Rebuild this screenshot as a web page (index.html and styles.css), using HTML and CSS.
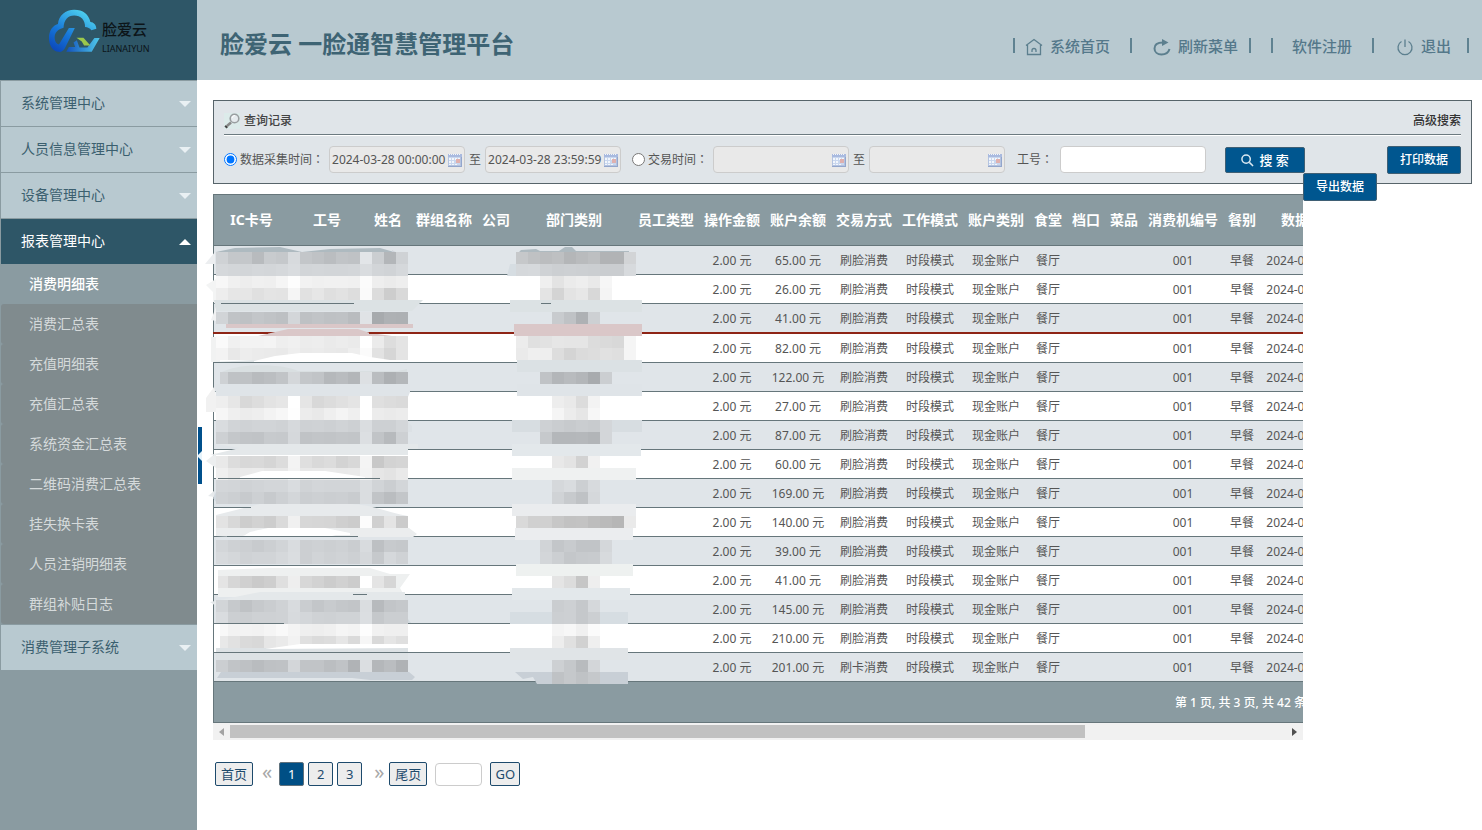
FILE: index.html
```html
<!DOCTYPE html>
<html lang="zh-CN">
<head>
<meta charset="utf-8">
<title>脸爱云 一脸通智慧管理平台</title>
<link rel="stylesheet" href="styles.css">
</head>
<body>
<svg class="defs" aria-hidden="true">
  <defs>
    <symbol id="cal" viewBox="0 0 14 14">
      <rect x="0" y="1" width="14" height="13" fill="#b4c3e0"/>
      <rect x="0" y="1" width="14" height="3" fill="#a9badf"/>
      <rect x="1" y="4" width="11" height="8" fill="#c9d7ee"/>
      <path d="M1 5h2v2h-2zM4 5h2v2h-2zM7 5h2v2h-2zM10 5h2v2h-2zM1 8h2v2h-2zM4 8h2v2h-2zM1 11h2v1h-2zM4 11h2v1h-2zM7 11h2v1h-2z" fill="#f2f6fc"/>
      <rect x="8" y="6" width="4" height="4" fill="#dfb0ae"/>
      <path d="M0 13h14v1h-14zM13 4h1v10h-1z" fill="#93a6cc"/>
      <path d="M1 1.500h12" stroke="#f4f6fa" stroke-dasharray="1 1"/>
    </symbol>
  </defs>
</svg>
<div class="layout">
  <aside class="sidebar">
    <div class="logo">
      <svg class="logo-mark" viewBox="144 24 160 138" role="img" aria-label="脸爱云">
        <defs>
          <linearGradient id="lg" x1="0" y1="1" x2="0.7" y2="0">
            <stop offset="0" stop-color="#0a3fb4"/><stop offset=".45" stop-color="#1676d8"/><stop offset="1" stop-color="#4ed0ee"/>
          </linearGradient>
          <linearGradient id="lb" x1="0" y1="0" x2="1" y2="0">
            <stop offset="0" stop-color="#1251bd"/><stop offset="1" stop-color="#50c8ea"/>
          </linearGradient>
        </defs>
        <path d="M176 156C158 154 147 136 147 114C147 92 158 77 174 72C176 47 197 29 223 29C250 29 267 43 272 66C282 67 289 74 290 86L275 91C270 84 264 82 256 81C256 59 243 46 223 46C204 46 192 59 191 83C173 88 164 98 164 113C164 124 169 132 177 134L207 84L225 84L195 145C189 154 184 157 176 156Z" fill="url(#lg)"/>
        <path d="M199 156L207 141L226 141L221 128L231 121L239 143L263 143L284 114L300 114L276 156Z" fill="url(#lb)"/>
        <path d="M230 113L251 113L272 137L253 137L246 125Z" fill="#9cc84b"/>
      </svg>
      <div class="logo-text"><b>脸爱云</b><small>LIANAIYUN</small></div>
    </div>
    <nav class="menu">
      <a class="group" href="#">系统管理中心<i class="arrow"></i></a>
      <a class="group" href="#">人员信息管理中心<i class="arrow"></i></a>
      <a class="group" href="#">设备管理中心<i class="arrow"></i></a>
      <a class="group open" href="#">报表管理中心<i class="arrow up"></i></a>
      <div class="submenu">
        <a class="current" href="#">消费明细表</a>
        <a href="#">消费汇总表</a>
        <a href="#">充值明细表</a>
        <a href="#">充值汇总表</a>
        <a href="#">系统资金汇总表</a>
        <a href="#">二维码消费汇总表</a>
        <a href="#">挂失换卡表</a>
        <a href="#">人员注销明细表</a>
        <a href="#">群组补贴日志</a>
      </div>
      <a class="group" href="#">消费管理子系统<i class="arrow"></i></a>
    </nav>
    <button class="handle" aria-label="收起菜单"></button>
  </aside>
  <div class="page">
    <header class="topbar">
      <h1>脸爱云 一脸通智慧管理平台</h1>
      <nav class="tools">
        <i class="bar"></i>
        <a class="home" href="#"><svg viewBox="0 0 18 18"><path d="M1 7.500L9 1.500L17 7.500M2.500 7V16.500H15.500V7M7 14V12.500a2 2 0 0 1 4 0V14"/></svg>系统首页</a>
        <i class="bar"></i>
        <a class="refresh" href="#"><svg viewBox="0 0 18 18"><path d="M10 4.500C5 4.500 1.500 6.500 1.500 10.500C1.500 14 4.500 16.500 8.500 16.500C12.500 16.500 15.500 14.500 16.500 11" stroke-width="2"/><path class="solid" d="M9 1L15.500 4.500L9 8Z"/></svg>刷新菜单</a>
        <i class="bar"></i>
        <i class="bar second"></i>
        <a class="register" href="#">软件注册</a>
        <i class="bar"></i>
        <a class="exit" href="#"><svg viewBox="0 0 18 18"><path d="M5.500 3.500a7 7 0 1 0 7 0M9 1.500V9"/></svg>退出</a>
        <i class="bar"></i>
      </nav>
    </header>
    <main class="content">
      <section class="search">
        <div class="search-head">
          <h2><svg viewBox="0 0 16 16"><rect width="16" height="16" fill="#dcebea"/><path d="M1.500 14.500L3 13" stroke="#444" stroke-width="3"/><path d="M3 13L7 9.500" stroke="#888" stroke-width="2.500"/><circle cx="10.500" cy="5.500" r="4.300" fill="#e6ebee" stroke="#999ea0" stroke-width="1.600"/><path d="M8 5a3 3 0 0 1 3-2.500" stroke="#fff" fill="none"/></svg>查询记录</h2>
          <a href="#">高级搜索</a>
        </div>
        <form class="search-row">
          <input type="radio" name="t" id="t1" checked>
          <label for="t1">数据采集时间<span class="colon" lang="zh-TW">：</span></label>
          <span class="date"><input type="text" aria-label="采集开始时间" value="2024-03-28 00:00:00"><svg><use href="#cal"/></svg></span>
          <span class="to">至</span>
          <span class="date"><input type="text" aria-label="采集结束时间" value="2024-03-28 23:59:59"><svg><use href="#cal"/></svg></span>
          <input class="second-radio" type="radio" name="t" id="t2">
          <label for="t2">交易时间<span class="colon" lang="zh-TW">：</span></label>
          <span class="date"><input type="text" aria-label="交易开始时间"><svg><use href="#cal"/></svg></span>
          <span class="to">至</span>
          <span class="date"><input type="text" aria-label="交易结束时间"><svg><use href="#cal"/></svg></span>
          <label class="no-label" for="no">工号<span class="colon" lang="zh-TW">：</span></label>
          <input class="no" type="text" id="no">
          <button type="button" class="btn find"><svg viewBox="0 0 14 14"><circle cx="5.500" cy="5.500" r="4.500" /><path d="M9 9L13 13"/></svg>搜 索</button>
          <button type="button" class="btn print">打印数据</button>
        </form>
        <button type="button" class="btn export">导出数据</button>
      </section>
      <section class="records">
        <div class="scroller">
          <table>
            <colgroup><col class="w75"><col class="w76"><col class="w46"><col class="w66"><col class="w38"><col class="w118"><col class="w66"><col class="w66"><col class="w66"><col class="w66"><col class="w66"><col class="w66"><col class="w38"><col class="w38"><col class="w38"><col class="w80"><col class="w38"><col class="w124"><col></colgroup>
            <thead><tr><th>IC卡号</th><th>工号</th><th>姓名</th><th>群组名称</th><th>公司</th><th>部门类别</th><th>员工类型</th><th>操作金额</th><th>账户余额</th><th>交易方式</th><th>工作模式</th><th>账户类别</th><th>食堂</th><th>档口</th><th>菜品</th><th>消费机编号</th><th>餐别</th><th>数据采集时间</th><th></th></tr></thead>
            <tbody id="rows"></tbody>
            <tfoot><tr><td colspan="19">第 1 页, 共 3 页, 共 42 条</td></tr></tfoot>
          </table>
        </div>
        <svg class="mask" id="mask" viewBox="204 244 444 444" aria-hidden="true"></svg>
        <div class="hbar"><i class="left"></i><span class="track"><span class="thumb"></span></span><i class="right"></i></div>
      </section>
      <nav class="pager">
        <button class="word">首页</button>
        <a class="prev" href="#">«</a>
        <button class="num on">1</button>
        <button class="num">2</button>
        <button class="num">3</button>
        <a class="next" href="#">»</a>
        <button class="word">尾页</button>
        <input type="text" aria-label="页码">
        <button class="go">GO</button>
      </nav>
    </main>
  </div>
</div>
<script src="app.js"></script>
</body>
</html>
```
FILE: styles.css
```css
* { box-sizing: border-box; }
body {
  margin: 0;
  font: 12px/18px "Noto Sans", "Noto Sans CJK SC", sans-serif;
  color: #555;
  background: #fff;
}
a { color: inherit; text-decoration: none; }
button, input { font: inherit; color: inherit; margin: 0; }
.defs { position: absolute; width: 0; height: 0; }
.layout { display: flex; min-height: 100vh; }

.sidebar { position: relative; flex: 0 0 197px; background: #8a9ba1; }
.logo {
  display: flex;
  height: 80px;
  padding: 8px 0 0 48px;
  background: #2e5667;
  color: #0c1418;
}
.logo-mark { width: 53px; height: 46px; }
.logo-text { display: flex; flex-direction: column; padding: 11px 0 0 1px; }
.logo-text b { font-size: 15px; line-height: 20px; font-weight: 500; }
.logo-text small { font: 9px/20px "Noto Sans", sans-serif; }
.group {
  display: flex;
  align-items: center;
  justify-content: space-between;
  height: 46px;
  padding: 0 6px 2px 20px;
  border-top: 1px solid #8a9ba1;
  border-left: 1px solid #8a9ba1;
  background: #b8c9d0;
  color: #3b5f6f;
  font-size: 14px;
}
.group.open { background: #2e5667; color: #fff; }
.arrow { margin-top: 2px; border: 6px solid transparent; border-top-color: #e9f0f3; border-bottom: 0; }
.arrow.up { border: 6px solid transparent; border-bottom-color: #fff; border-top: 0; }
.submenu a {
  display: flex;
  align-items: center;
  height: 40px;
  margin-left: 1px;
  padding-left: 28px;
  border-radius: 3px 0 0 3px;
  background: #808b8e;
  color: #d5dadb;
  font-size: 14px;
}
.submenu a.current { background: #8a9ba1; color: #fff; font-weight: 500; }
.handle {
  position: absolute;
  top: 427px;
  right: -5px;
  width: 4px;
  height: 57px;
  padding: 0;
  border: 0;
  background: #00508c;
}
.handle::after {
  content: "";
  position: absolute;
  top: 24px;
  left: -1px;
  border: 5px solid transparent;
  border-right-color: #e6f3fb;
  border-left: 0;
}

.page { flex: 1; min-width: 0; }
.topbar {
  display: flex;
  justify-content: space-between;
  height: 80px;
  padding: 0 13px 0 23px;
  background: #b8c9d0;
}
h1 { margin: 0; font-size: 24px; line-height: 88px; font-weight: 700; color: #3e6474; white-space: nowrap; }
.tools { display: flex; align-items: center; height: 91px; font-size: 15px; color: #54788a; font-weight: 500; white-space: nowrap; }
.tools a { display: flex; align-items: center; }
.tools svg { width: 18px; height: 18px; margin: 2px 7px 0 0; fill: none; stroke: #5c7f8e; stroke-width: 1.300; }
.tools .solid { fill: #5c7f8e; stroke: none; }
.bar { width: 2px; height: 15px; background: #5f8291; }
.home { margin: 0 20px 0 10px; }
.refresh { margin: 0 11px 0 21px; }
.second { margin-left: 20px; }
.register { margin: 0 20px 0 19px; }
.exit { margin: 0 16px 0 22px; }

.content { padding: 20px 10px 0 16px; }
.search { position: relative; height: 84px; padding: 10px; border: 1px solid #57646a; background: #e0e5e9; }
.search-head {
  display: flex;
  align-items: center;
  justify-content: space-between;
  height: 24px;
  padding-bottom: 3px;
  border-bottom: 1px solid #6c7a80;
  box-shadow: 0 1px 0 #fff;
  color: #333;
  font-weight: 500;
}
.search-head h2 { display: flex; align-items: center; margin: 0; font-size: 12px; font-weight: 500; color: #444; }
.search-head svg { width: 16px; height: 16px; margin-right: 4px; }
.search-row { display: flex; align-items: center; height: 27px; margin-top: 11px; white-space: nowrap; }
.search-row input[type=radio] { flex: none; width: 13px; height: 13px; margin-right: 3px; }
.search-row .second-radio { margin-left: 11px; }
.colon { font-family: "Noto Sans CJK TC", sans-serif; }
.date { position: relative; flex: none; width: 136px; margin-left: 5px; }
.date input { display: block; width: 100%; height: 27px; padding: 0 2px; border: 1px solid #ccc; border-radius: 4px; background: #e9e9e9; outline: 0; }
.date svg { position: absolute; right: 3px; top: 7px; width: 14px; height: 14px; }
.to { margin: 0 -1px 0 4px; }
.no-label { margin-left: 12px; }
.no { flex: none; width: 146px; height: 27px; margin-left: 7px; border: 1px solid #ccc; border-radius: 4px; background: #fff; }
.btn { padding: 0; border: 1px solid #3f5f74; border-radius: 2px; background: #00568f; color: #fff; font-weight: 500; }
.find { display: flex; align-items: center; justify-content: center; width: 80px; height: 26px; margin: 1px 0 0 19px; font-size: 13px; }
.find svg { width: 13px; height: 13px; margin-right: 5px; fill: none; stroke: #dbe9f2; stroke-width: 1.600; }
.print { width: 74px; height: 28px; margin-left: auto; }
.export { position: absolute; top: 72px; right: 94px; width: 74px; height: 28px; }

.records { position: relative; margin: 10px 169px 0 0; }
.scroller { overflow: hidden; }
table { width: 1348px; table-layout: fixed; border-spacing: 0; border: solid #66767b; border-width: 1px 0 0 1px; }
th { height: 51px; padding: 0; border-bottom: 1px solid #66767b; background: #8a9ba1; color: #fff; font-size: 14px; white-space: nowrap; }
td { height: 29px; padding: 2px 0 0; border-bottom: 1px solid #66767b; text-align: center; white-space: nowrap; }
tbody tr:nth-child(odd) td { background: #e0e5e9; }
tbody tr.marked td { height: 30px; border-bottom: 2px solid #8e2415; }
tfoot td { height: 41px; padding-left: 961px; background: #8a9ba1; color: #fff; font-weight: 500; text-align: left; }
.w38 { width: 38px; }
.w46 { width: 46px; }
.w66 { width: 66px; }
.w75 { width: 75px; }
.w76 { width: 76px; }
.w80 { width: 80px; }
.w118 { width: 118px; }
.w124 { width: 124px; }
.mask { position: absolute; left: -9px; top: 50px; width: 444px; height: 444px; }
.hbar { display: flex; align-items: center; height: 17px; background: #f1f1f1; }
.hbar i { width: 17px; border: solid transparent; border-width: 4px 6px; }
.hbar .left { border-right: 5px solid #a3a3a3; border-left-width: 5px; width: 11px; margin-right: 6px; }
.hbar .right { border-left: 5px solid #505050; border-right-width: 5px; width: 11px; margin-left: 6px; }
.track { flex: 1; }
.thumb { display: block; width: 81%; height: 13px; background: #c1c1c1; }

.pager { display: flex; align-items: center; height: 24px; margin: 22px 0 0 2px; font-size: 13px; color: #1d4a6c; }
.pager button { height: 24px; padding: 0; border: 1px solid #1d4a6c; border-radius: 2px; background: #ededed; }
.pager .word { width: 38px; }
.pager .num { width: 25px; margin-right: 4px; }
.pager .on { border-color: #60717c; background: #004f85; color: #fff; }
.pager a { color: #a8a8a8; font-size: 20px; line-height: 20px; }
.prev { margin: 0 7px 4px 9px; }
.next { margin: 0 5px 4px 8px; }
.pager input { width: 47px; height: 23px; margin: 1px 8px 0; border: 1px solid #ccc; border-radius: 4px; }
.pager .go { width: 30px; }
```
FILE: app.js
```js
const balances = ["65.00", "26.00", "41.00", "82.00", "122.00", "27.00", "87.00", "60.00", "169.00", "140.00", "39.00", "41.00", "145.00", "210.00", "201.00"];
document.getElementById("rows").innerHTML = balances.map((b, i) => {
  const cells = ["", "", "", "", "", "", "", "2.00 元", b + " 元", i === 14 ? "刷卡消费" : "刷脸消费", "时段模式", "现金账户", "餐厅", "", "", "001", "早餐", "2024-03-28 07:30:00", ""];
  return `<tr${i === 2 ? ' class="marked"' : ""}>` + cells.map(c => `<td>${c}</td>`).join("") + "</tr>";
}).join("");

// Freehand smears that lie behind the mosaic tiles: [fill, path]
const smears = [
  ["#eceef0", "M205 264L215 252V264Z"],
  ["#aebac0", "M216 252L235 248L280 247L302 252L330 249L380 248L394 252V264H216Z"],
  ["#cfd4db", "M392 250L408 259V264H392Z"],
  ["#f3f4f4", "M206 285L216 279V302H213V292Z"],
  ["#dce2e4", "M214 300H423L412 311H216Z"],
  ["#f1f2f3", "M211 320L216 307V321Z"],
  ["#dac7c8", "M226 324H413V328H226ZM258 336L288 329H358L370 333L392 336Z"],
  ["#f1f2f2", "M211 337H220V362H211Z"],
  ["#dfe4e6", "M213 362L256 360L260 357H375L390 360V362Z"],
  ["#d9dfe1", "M220 373C240 362 285 364 298 371H398L407 369V384H222Z"],
  ["#dfe4e8", "M215 384H410V392L408 397H216Z"],
  ["#f1f1f1", "M206 412V398L214 387L216 396V412Z"],
  ["#dce1e5", "M216 444L222 422H408L412 426V432H216Z"],
  ["#e4e8ea", "M216 444H418V449H408V455H210L240 448Z"],
  ["#eceeef", "M206 461L216 453V468Z"],
  ["#d1d9df", "M213 498L222 480H405L408 504H218Z"],
  ["#e7eaec", "M208 496L214 491V497ZM216 515L260 504H350C370 504 390 513 408 516V530H216Z"],
  ["#ebedee", "M216 528H409L417 534L413 537H340L300 527H268L240 537L216 536Z"],
  ["#d3dade", "M217 563L223 540H408V561L340 564Z"],
  ["#eef0f0", "M218 576V570L270 568H370L390 574H410L400 588L405 597H218Z"],
  ["#e4e8ea", "M210 602L260 592H405V600H216V606Z"],
  ["#d1d9de", "M216 600H408L405 615L411 623H216Z"],
  ["#dde2e5", "M216 648H408V664H216Z"],
  ["#c8cfd6", "M217 678L221 672H409L415 677L412 680H370L352 678Z"],
  ["#aebac0", "M518 253L521 250L536 249L540 251H559L565 247H572L576 251H629V256H518Z"],
  ["#d6dde2", "M629 252L636 262V276H507L510 264H629Z"]
];

// Tiles on a 12px grid: [x, y, tint, lightness of each tile]
const tiles = [
  [216, 252, 3, "d2 c7 c7 bb cb c8 da c6 c2 bd c4 c2 e5 ce b6 d2"],
  [216, 264, 3, "d8 d6 d5 d7 d6 d8 dc d5 d6 d5 d5 d6 dc d5 d3 d8"],
  [216, 276, 0, "f7 f0 ed f0 ef f5 fd f2 f0 f1 f1 f0 fb ee eb ee"],
  [216, 288, 0, "ed e6 e6 e0 e4 e3 f5 e1 e6 df e2 dd fa dc cd d9"],
  [216, 312, 3, "d4 c3 c1 c6 c3 c0 d6 c1 c4 c1 c2 bc e3 aa b1 b0"],
  [216, 336, 0, "fa f0 f3 f3 f4 ee f0 ec ed ea ec ea ff eb dd e4"],
  [216, 348, 0, "f3 e8 ed eb ea e9 ee ea eb e9 e8 ee fb e2 d6 e4"],
  [220, 372, 3, "d1 c2 c2 bb be c4 d7 c7 c4 b8 bc b6 e0 bd b0 b7"],
  [216, 396, 0, "ee e6 d8 dd e3 e6 ff e5 d8 dc e0 e4 ff df dc da"],
  [216, 408, 0, "f6 ef ec ee f3 f7 fe ec e9 ef f4 ef ff ec ea ec"],
  [216, 420, 3, "dc d4 d2 d4 d4 d2 d9 d1 d2 d0 d3 d0 dd d0 d0 d6"],
  [216, 432, 3, "d0 c7 c4 c3 ca c9 d8 c3 c5 c4 c6 c5 df c4 ba d0"],
  [216, 456, 0, "e9 dc d8 d9 d5 dc f3 df d9 dc d3 d8 f4 c8 d3 d5"],
  [216, 468, 0, "ef e8 ea eb e8 e8 f2 e8 e9 ea e9 ea f3 e6 e3 e9"],
  [216, 480, 3, "d6 d5 d2 d4 d6 d6 dc d3 d6 d5 d5 d5 dd d4 ce d6"],
  [216, 492, 3, "d2 cf ca d0 ca d0 d6 ce d0 ce cf cc dd c4 bd c6"],
  [216, 516, 0, "e3 d8 cd d2 cd da f0 d7 d6 d5 cf cc fc d0 e4 cb"],
  [216, 540, 3, "d6 d1 cf cb cf d4 dc cf d1 cf d1 cd db c0 ca c8"],
  [216, 552, 3, "da d7 d2 d4 d4 d8 dd cf d4 d1 d3 d0 d8 c9 d8 d2"],
  [218, 576, 0, "e4 d6 d0 ca ce df ee d7 d2 cc d1 cc ff e4 d6"],
  [216, 600, 3, "d5 c9 c2 c9 cd d2 db cd c6 cb c7 c5 dd ba c5 c8"],
  [216, 612, 3, "dc cf ce d1 d1 d2 da d6 d2 d1 d3 d3 de c8 ce ce"],
  [220, 624, 0, "f8 f2 f3 f2 f5 f9 f4 ef ee f0 f5 f3 fd f1 ef ef"],
  [220, 636, 0, "e8 e1 da d8 e6 ea f2 e0 db dd e6 da f6 d9 e5 df"],
  [216, 660, 3, "ce c4 c1 bc c1 c2 d6 c4 c4 be c3 b3 de b7 bd b2"],

  [516, 252, 2, "c8 c1 bd c0 b6 bb bf b3 b3 d4"],
  [516, 264, 3, "d8 d9 d2 cf d0 cf ce cd cd da"],
  [540, 276, 0, "ef e3 eb ee e9 f6"],
  [540, 288, 0, "e4 d4 e3 e7 d8 f4"],
  [552, 312, 3, "cb c2 b1 d0"],
  [516, 336, 0, "ec e0 e2 e6 e5 e5 dc da d8 f5"],
  [516, 348, 0, "ea ef ee dd d4 db dd e1 df f5"],
  [540, 372, 3, "c3 b6 bb b6 ab ce"],
  [552, 396, 0, "ed e9 dc f3"],
  [552, 408, 0, "f5 ec e6 f7"],
  [540, 420, 3, "d1 cd ca cd cb d6"],
  [540, 432, 3, "c9 b7 b7 b8 b5 d6"],
  [552, 456, 0, "e8 e3 d2 f1"],
  [552, 480, 3, "d8 dc cf da"],
  [552, 492, 3, "d3 ca c2 d8"],
  [516, 516, 0, "d9 d0 d0 c7 c2 c3 bd ba b6 ea"],
  [540, 540, 3, "d4 c6 cb c4 c4 d7"],
  [540, 552, 3, "d6 cf c7 ca cb da"],
  [552, 576, 0, "e4 dc c6 ee"],
  [552, 600, 3, "cd d0 c8 d8"],
  [552, 612, 3, "cf d0 c8 cf"],
  [552, 624, 0, "f4 f7 f0 fb"],
  [552, 636, 0, "ed e0 d1 ef"],
  [552, 660, 3, "d0 c8 bb d6"],
  [552, 672, 3, "c2 c8 c2 c8"]
];

// Wide strips across the department column: [x, y, width, fill]
const strips = [
  [510, 300, 132, "#dce2e4"],
  [514, 324, 128, "#dac7c8"],
  [517, 360, 125, "#dbe1e4"],
  [517, 384, 125, "#dfe4e8"],
  [512, 420, 130, "#d7dde1"],
  [512, 444, 129, "#e3e8eb"],
  [512, 468, 124, "#eff1f1"],
  [512, 504, 124, "#eaecee"],
  [515, 528, 118, "#ebedef"],
  [516, 564, 117, "#eef1f0"],
  [512, 588, 118, "#e3e8eb"],
  [510, 612, 118, "#d6dde2"],
  [510, 648, 118, "#e0e4e7"]
];

const hex = n => Math.max(0, Math.min(255, n)).toString(16).padStart(2, "0");
const out = smears.map(([f, d]) => `<path fill="${f}" d="${d}"/>`);
strips.forEach(([x, y, w, f]) => out.push(`<rect x="${x}" y="${y}" width="${w}" height="12" fill="${f}"/>`));
out.push('<path fill="#c8cfd6" d="M515 672H628V684H537L533 677L523 679Z"/>');
tiles.forEach(([x, y, t, row]) => row.split(" ").forEach((v, i) => {
  const l = parseInt(v, 16);
  // Tiles stay aligned to the grid even where a row starts late
  const left = i ? Math.floor(x / 12) * 12 + i * 12 : x;
  const right = Math.floor(x / 12) * 12 + i * 12 + 12;
  out.push(`<rect x="${left}" y="${y}" width="${right - left}" height="12" fill="#${hex(l - t)}${hex(l)}${hex(l + t)}"/>`);
}));
// White sweeps and leftover row lines over the tiles
out.push('<path fill="#fff" d="M254 361L275 356L300 353H352L370 357L390 360V362H254ZM240 477L262 471H325L365 477V478H240ZM250 532L268 528H325L350 533V535H245ZM265 649L300 644H408V648Z"/>');
out.push('<path stroke="#66767b" d="M221 303.500H354M213 362.500H408M218 478.500H380M226 507.500H251M227 536.500H358M213 565.500H408M353 594.500H367M213 623.500H284M213 652.500H408M541 303.500H551"/>');
out.push('<path stroke="#8e2415" stroke-width="2" d="M213 333H268M369 333H408"/>');
document.getElementById("mask").innerHTML = out.join("");
```
